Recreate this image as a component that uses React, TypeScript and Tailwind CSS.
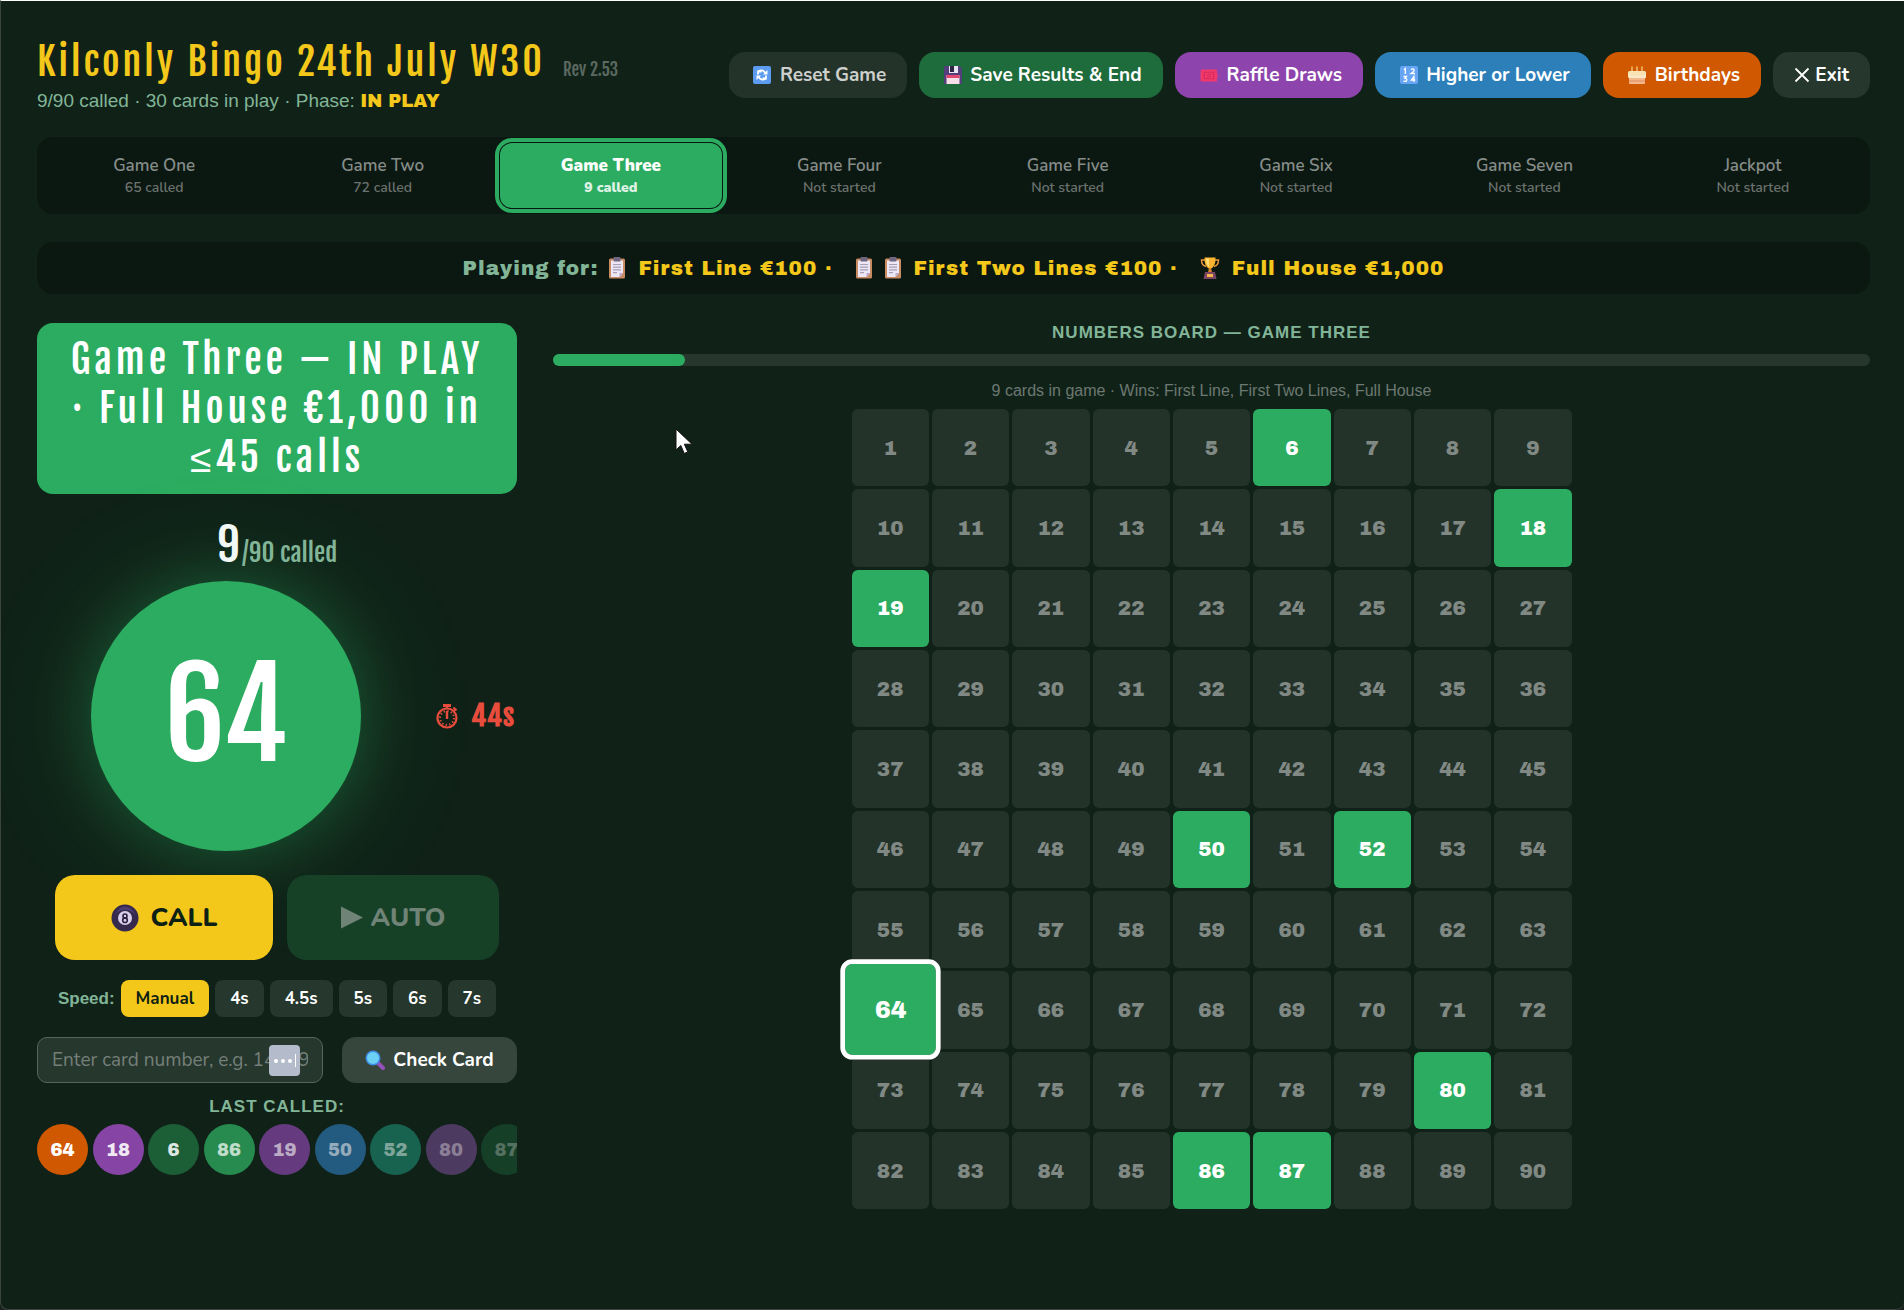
import type { ReactNode } from "react";

const display = "font-['Fjalla_One','Oswald','Roboto_Condensed',sans-serif]";
const heavy = "font-['Arial_Black','Archivo_Black','Inter','Liberation_Sans',sans-serif]";

function ResetIcon() {
  return (
    <svg viewBox="0 0 18 18" className="size-[18px] shrink-0" aria-hidden="true">
      <rect width="18" height="18" rx="2" fill="#5b9cf0" />
      <path d="M5 8.500V5.500h3.500M13 9.500v3H9.500" fill="none" stroke="#fff" strokeWidth="1.800" />
      <path d="M5.500 5.500q3.500-3 7 1.500M12.500 12.500q-3.500 3-7-1.500" fill="none" stroke="#fff" strokeWidth="1.800" />
      <path d="M14.500 4v4.500H10zM3.500 14V9.500H8z" fill="#fff" />
    </svg>
  );
}

function DiskIcon() {
  return (
    <svg viewBox="0 0 18 18" className="size-[18px] shrink-0" aria-hidden="true">
      <path d="M1 0h14.500L18 2.500V17a1 1 0 0 1-1 1H1a1 1 0 0 1-1-1V1a1 1 0 0 1 1-1z" fill="#533f7c" />
      <path d="M5 0h9v7H5z" fill="#e9e4f2" />
      <path d="M6 0h4v6H6z" fill="#2e2444" />
      <path d="M2.500 9h13v9h-13z" fill="#f5dfe8" />
      <path d="M2.500 9h13v3h-13z" fill="#e2476f" />
    </svg>
  );
}

function TicketIcon() {
  return (
    <svg viewBox="0 0 20 16" className="h-[15px] w-5 shrink-0" aria-hidden="true">
      <path d="M2 1.500h16l.8 1.500-.8 1.500 1.500 1.500-.8 2 .8 2-1.500 1.500.8 1.500L18 14.500H2L.7 13l.8-1.500L.5 10l.8-2-.8-2 1-1.500L.7 3z" fill="#f1386a" />
      <path d="M5 4.500h10v7H5z" fill="none" stroke="#d42a5c" strokeWidth="1.200" />
      <circle cx="10" cy="8" r="1.500" fill="none" stroke="#d42a5c" />
    </svg>
  );
}

function NumbersIcon() {
  return (
    <svg viewBox="0 0 18 18" className="size-[18px] shrink-0" aria-hidden="true">
      <rect width="18" height="18" rx="2" fill="#68a5f5" />
      <g fill="none" stroke="#fff" strokeWidth="1.300">
        <path d="M4 3.800l1.300-1.300V8M11 3.600q1.300-1.300 2.500-.5 1.300 1.200-.3 2.600L11 7.500h4" />
        <path d="M3.500 10.500h3L5 12.300q2 0 1.800 1.700-.4 1.800-3.300 1.200M14 16v-5.500L11.300 14h4" />
      </g>
    </svg>
  );
}

function CakeIcon() {
  return (
    <svg viewBox="0 0 20 20" className="size-5 shrink-0" aria-hidden="true">
      <path d="M5 2v5M10 2v5M15 2v5" stroke="#f3d08a" strokeWidth="1.300" />
      <path d="M5 .5l.8 1.700H4.200zM10 .5l.8 1.700H9.200zM15 .5l.8 1.700h-1.600z" fill="#ffb02e" />
      <rect x="1" y="6" width="18" height="7" rx="1.500" fill="#f7e3b5" />
      <rect x="2" y="12" width="16" height="7" rx="1" fill="#f3b98a" />
      <path d="M1 9q2 3 4.500 1 2 2.500 4.500 0 2.500 2.500 4.500 0 2.500 2 4.500-1v4H2z" fill="#fbe8c8" />
      <path d="M2 16h16" stroke="#e08c60" strokeWidth="1.200" />
    </svg>
  );
}

function CrossIcon() {
  return (
    <svg viewBox="0 0 16 16" className="size-4 shrink-0" aria-hidden="true">
      <path d="M1.500 1.500l13 13M14.500 1.500l-13 13" stroke="#fff" strokeWidth="1.800" />
    </svg>
  );
}

function ClipboardIcon() {
  return (
    <svg viewBox="0 0 18 22" className="h-[22px] w-[18px] shrink-0" aria-hidden="true">
      <rect x="1" y="1.500" width="16" height="20" rx="1.500" fill="#c98b62" />
      <path d="M3 3.500h12v12.500l-3.500 4H3z" fill="#ece6f5" />
      <path d="M15 16l-3.500 4v-4z" fill="#b9a9d3" />
      <rect x="5.500" y="0" width="7" height="4.500" rx="1" fill="#6f6781" />
      <path d="M5 7.500h8M5 10.200h8M5 12.900h8M5 15.600h4" stroke="#a79fb8" strokeWidth="1.200" />
    </svg>
  );
}

function TrophyIcon() {
  return (
    <svg viewBox="0 0 20 22" className="h-[22px] w-5 shrink-0" aria-hidden="true">
      <path d="M5 3H1.500q0 5.500 4.500 6.500M15 3h3.500q0 5.500-4.500 6.500" fill="none" stroke="#e8973a" strokeWidth="1.500" />
      <path d="M4.500.5h11q.5 9.500-5.500 11.500Q4 10 4.500.5z" fill="#fbb52f" />
      <path d="M6 1.500h3q-.5 6 .5 9-3.500-2.500-3.500-9z" fill="#ffe07a" />
      <path d="M8.800 11.500h2.400l.8 4H8z" fill="#d9822b" />
      <path d="M5 15h10l1.500 7h-13z" fill="#7a4664" />
      <rect x="7" y="17" width="6" height="3" fill="#f4b54a" />
    </svg>
  );
}

function StopwatchIcon() {
  return (
    <svg viewBox="0 0 24 26" className="h-[26px] w-6 shrink-0" aria-hidden="true">
      <path d="M8 1h8v3H8z" fill="#e74c3c" />
      <path d="M12 3v3M18.500 4.500l3 3M19 7.500l1.500-1.500" stroke="#e74c3c" strokeWidth="2.200" />
      <circle cx="12" cy="15" r="9.500" fill="none" stroke="#e74c3c" strokeWidth="2.200" />
      <circle cx="12" cy="15" r="7" fill="none" stroke="#e74c3c" strokeWidth="2" strokeDasharray="1.400 2.265" />
      <path d="M12 8v8" stroke="#e74c3c" strokeWidth="2.400" />
    </svg>
  );
}

function EightBallIcon() {
  return (
    <svg viewBox="0 0 28 28" className="size-7 shrink-0" aria-hidden="true">
      <circle cx="14" cy="14" r="13.500" fill="#352a4e" />
      <path d="M4 11Q7 3 14 2.500 22 3 24.500 11 20 6 14 6T4 11z" fill="#4c3d70" />
      <circle cx="14" cy="14" r="7" fill="#d8d0ea" />
      <circle cx="14" cy="12" r="2" fill="none" stroke="#2b2140" strokeWidth="1.600" />
      <circle cx="14" cy="16.200" r="2.300" fill="none" stroke="#2b2140" strokeWidth="1.600" />
    </svg>
  );
}

function PlayIcon() {
  return (
    <svg viewBox="0 0 22 22" className="h-[23px] w-[22px] shrink-0" aria-hidden="true">
      <path d="M0 0l22 11L0 22z" fill="currentColor" />
    </svg>
  );
}

function MagnifierIcon() {
  return (
    <svg viewBox="0 0 20 20" className="size-5 shrink-0" aria-hidden="true">
      <path d="M12 12l6 6" stroke="#9350b8" strokeWidth="4" strokeLinecap="round" />
      <circle cx="8" cy="8" r="7.500" fill="#3d8de6" />
      <circle cx="8" cy="8" r="6" fill="#6cd0f4" />
    </svg>
  );
}

const actions: { label: string; icon: ReactNode; style: string }[] = [
  { label: "Reset Game", icon: <ResetIcon />, style: "bg-[#24332a] text-[#cdd0cd] pl-6 pr-[21px] gap-[9px]" },
  { label: "Save Results & End", icon: <DiskIcon />, style: "bg-[#1e6b3c] text-white pl-[25px] pr-[21px] gap-2" },
  { label: "Raffle Draws", icon: <TicketIcon />, style: "bg-[#8e44ad] text-white pl-6 pr-[21px] gap-2" },
  { label: "Higher or Lower", icon: <NumbersIcon />, style: "bg-[#2c7fb9] text-white pl-[25px] pr-[21px] gap-2" },
  { label: "Birthdays", icon: <CakeIcon />, style: "bg-[#d05800] text-white pl-6 pr-[21px] gap-2" },
  { label: "Exit", icon: <CrossIcon />, style: "bg-[#26372d] text-white pl-[21px] pr-[21px] gap-[5px]" },
];

const games = [
  ["Game One", "65 called"],
  ["Game Two", "72 called"],
  ["Game Three", "9 called"],
  ["Game Four", "Not started"],
  ["Game Five", "Not started"],
  ["Game Six", "Not started"],
  ["Game Seven", "Not started"],
  ["Jackpot", "Not started"],
];

const called = [64, 18, 6, 86, 19, 50, 52, 80, 87];
const latest = 64;
const speeds = ["Manual", "4s", "4.5s", "5s", "6s", "7s"];

const recent = [
  { n: 64, style: "bg-[#d05800] text-white" },
  { n: 18, style: "bg-[#8644a4] text-[#f0e9f3]" },
  { n: 6, style: "bg-[#1c5e36] text-[#dfe7e2]" },
  { n: 86, style: "bg-[#278b4f] text-[#bfddca]" },
  { n: 19, style: "bg-[#653a7f] text-[#bcabc5]" },
  { n: 50, style: "bg-[#235a80] text-[#94abbb]" },
  { n: 52, style: "bg-[#17634f] text-[#7fa59a]" },
  { n: 80, style: "bg-[#4d3a61] text-[#8a7f95]" },
  { n: 87, style: "bg-[#163f27] text-[#557060]" },
];

function Cell({ n }: { n: number }) {
  const base = `flex aspect-square items-center justify-center rounded-md text-xl ${heavy}`;
  if (n === latest)
    return <div className={`${base} relative z-10 scale-[1.18] bg-[#2cac60] text-white outline-4 outline-white`}>{n}</div>;
  if (called.includes(n)) return <div className={`${base} bg-[#2cac60] text-white`}>{n}</div>;
  return <div className={`${base} bg-[#24332a] text-[#818984]`}>{n}</div>;
}

export default function App() {
  return (
    <div className="bg-[#1b211e]">
      <div className="min-h-screen overflow-hidden rounded-b-lg border-t border-b border-l border-t-white border-b-[#3b453f] border-l-[#3b453f] bg-[#102218] pt-[38px] pr-[34px] pl-9 font-['Liberation_Sans',Arial,sans-serif] text-white">
        <header className="flex items-start justify-between">
          <div>
            <div className="flex items-baseline gap-[18px]">
              <h1 className={`text-[38px] leading-[46px] tracking-[3px] text-[#f4c81a] ${display}`}>Kilconly Bingo 24th July W30</h1>
              <span className={`text-[17px] text-[#5b6961] ${display}`}>Rev 2.53</span>
            </div>
            <p className="mt-1 text-[19px] leading-6 text-[#82b597]">
              9/90 called · 30 cards in play · Phase: <span className={`text-lg leading-6 text-[#f4c81a] ${heavy}`}>IN PLAY</span>
            </p>
          </div>
          <div className="mt-[13px] flex gap-3">
            {actions.map((a) => (
              <button key={a.label} className={`flex h-[46px] items-center rounded-2xl font-['Nunito','Open_Sans',sans-serif] text-[19px] font-bold whitespace-nowrap ${a.style}`}>
                {a.icon}
                {a.label}
              </button>
            ))}
          </div>
        </header>

        <nav className="mt-6 grid grid-cols-8 gap-[6px] rounded-2xl bg-[#0b1811] p-[6px] font-['Nunito','Open_Sans',sans-serif]">
          {games.map(([name, status]) => (
            <button
              key={name}
              className={
                name === "Game Three"
                  ? "flex h-[65px] flex-col items-center justify-center rounded-xl bg-[#2cac60] font-black text-white shadow-[0_0_0_1px_#0b1811,0_0_0_5px_#2cac60]"
                  : "flex h-[65px] flex-col items-center justify-center rounded-xl font-semibold text-[#868c89]"
              }
            >
              <span className="text-[17px] leading-6">{name}</span>
              <span className={name === "Game Three" ? "text-sm leading-5 text-[#dcf2e4]" : "text-sm leading-5 text-[#6b726e]"}>{status}</span>
            </button>
          ))}
        </nav>

        <section className={`mt-7 flex h-[52px] items-center justify-center rounded-2xl bg-[#0b1811] text-xl tracking-[1px] text-[#f4c81a] ${heavy}`}>
          <span className="mr-[10px] text-[#82b597]">Playing for:</span>
          <ClipboardIcon />
          <span className="ml-3">First Line €100 ·</span>
          <span className="ml-[22px] flex gap-[11px]">
            <ClipboardIcon />
            <ClipboardIcon />
          </span>
          <span className="ml-3">First Two Lines €100 ·</span>
          <span className="ml-[22px]">
            <TrophyIcon />
          </span>
          <span className="ml-3">Full House €1,000</span>
        </section>

        <main className="mt-[29px] flex gap-9">
          <aside className="flex w-[480px] shrink-0 flex-col">
            <h2 className={`rounded-2xl bg-[#2cac60] px-7 py-3 text-center text-[39px] leading-[49px] tracking-[4px] ${display}`}>
              Game Three — IN PLAY · Full House €1,000 in <span className="font-['Liberation_Sans',Arial,sans-serif] leading-none">≤</span>45 calls
            </h2>
            <p className={`relative z-10 mt-[23px] text-center text-[46px] leading-[56px] text-[#f2f8f5] ${display}`}>
              9<span className="ml-0.5 text-[25px] text-[#82b597]">/90 called</span>
            </p>
            <div className="flex items-center justify-between pr-0.5 pl-[54px]">
              <div className={`flex size-[270px] items-center justify-center rounded-full bg-[#2cac60] text-[120px] leading-none shadow-[0_0_60px_rgba(45,174,97,0.3),0_0_120px_rgba(45,174,97,0.2)] ${display}`}>
                <span>64</span>
              </div>
              <div className={`flex items-center gap-3 text-[28px] leading-8 font-bold tracking-[1px] text-[#e74c3c] ${display}`}>
                <StopwatchIcon />
                44s
              </div>
            </div>

            <div className="relative z-10 mt-6 flex justify-center gap-[14px] font-['Nunito','Open_Sans',sans-serif] text-[26px] font-extrabold">
              <button className="flex h-[85px] w-[218px] items-center justify-center gap-3 rounded-[20px] bg-[#f4c81a] text-[#0d2015]">
                <EightBallIcon />
                CALL
              </button>
              <button disabled className="flex h-[85px] w-[212px] items-center justify-center gap-2 rounded-[20px] bg-[#174127] text-[#6f8377]">
                <PlayIcon />
                AUTO
              </button>
            </div>

            <div className="mt-5 flex items-center justify-center gap-[6px]">
              <span className="text-[17px] font-bold text-[#82b597]">Speed:</span>
              {speeds.map((s) => (
                <button
                  key={s}
                  className={
                    s === "Manual"
                      ? "h-[37px] rounded-lg bg-[#f4c81a] px-[15px] font-['Nunito','Open_Sans',sans-serif] text-[17px] font-bold text-[#0d2015]"
                      : "h-[37px] rounded-lg bg-[#26372d] px-[15px] font-['Nunito','Open_Sans',sans-serif] text-[17px] font-bold text-white"
                  }
                >
                  {s}
                </button>
              ))}
            </div>

            <div className="mt-5 flex items-center justify-between font-['Nunito','Open_Sans',sans-serif]">
              <div className="relative w-[286px]">
                <input
                  aria-label="Card number"
                  placeholder="Enter card number, e.g. 14829"
                  className="h-[46px] w-full rounded-[10px] border border-[#52675a] bg-[#26372d] px-[14px] text-[19px] text-white placeholder:text-[#757f79] placeholder:opacity-100"
                />
                <span aria-hidden="true" className="absolute top-2 right-[23px] flex h-[31px] w-[31px] items-center justify-center gap-[3px] rounded bg-[#b4bbca]">
                  <i className="size-1 rounded-full bg-white" />
                  <i className="size-1 rounded-full bg-white" />
                  <i className="size-1 rounded-full bg-white" />
                  <i className="h-[13px] w-px bg-white" />
                </span>
              </div>
              <button className="flex h-[46px] w-[175px] items-center justify-center gap-2 rounded-[14px] bg-[#36463c] text-[19px] font-bold">
                <MagnifierIcon />
                Check Card
              </button>
            </div>

            <h3 className="mt-[14px] text-center text-[17px] leading-5 font-bold tracking-[1px] text-[#82b597]">LAST CALLED:</h3>
            <div className="mt-[7px] overflow-hidden">
              <ol className="flex w-[495px] justify-between">
                {recent.map((r) => (
                  <li key={r.n} className={`flex size-[51px] items-center justify-center rounded-full text-lg ${heavy} ${r.style}`}>
                    {r.n}
                  </li>
                ))}
              </ol>
            </div>
          </aside>

          <section className="relative min-w-0 flex-1">
            <h2 className="text-center text-[17px] leading-5 font-bold tracking-[1px] text-[#82b597]">NUMBERS BOARD — GAME THREE</h2>
            <div className="mt-[11px] h-3 rounded-full bg-[#28372e]">
              <div className="h-3 w-1/10 rounded-full bg-[#2cac60]" />
            </div>
            <p className="mt-[15px] text-center text-base leading-5 text-[#6c7871]">9 cards in game · Wins: First Line, First Two Lines, Full House</p>
            <div className="mx-auto mt-2 grid w-[720px] grid-cols-9 gap-[3px]">
              {Array.from({ length: 90 }, (_, i) => (
                <Cell key={i} n={i + 1} />
              ))}
            </div>
            <svg viewBox="0 0 18 27" className="absolute top-[105px] left-[122px] h-[27px] w-[18px]" aria-hidden="true">
              <path d="M1 1v21l4.800-4.500 3.500 8 3.500-1.600-3.400-7.700H17z" fill="#fff" stroke="#111" strokeWidth="1" />
            </svg>
          </section>
        </main>
      </div>
    </div>
  );
}
